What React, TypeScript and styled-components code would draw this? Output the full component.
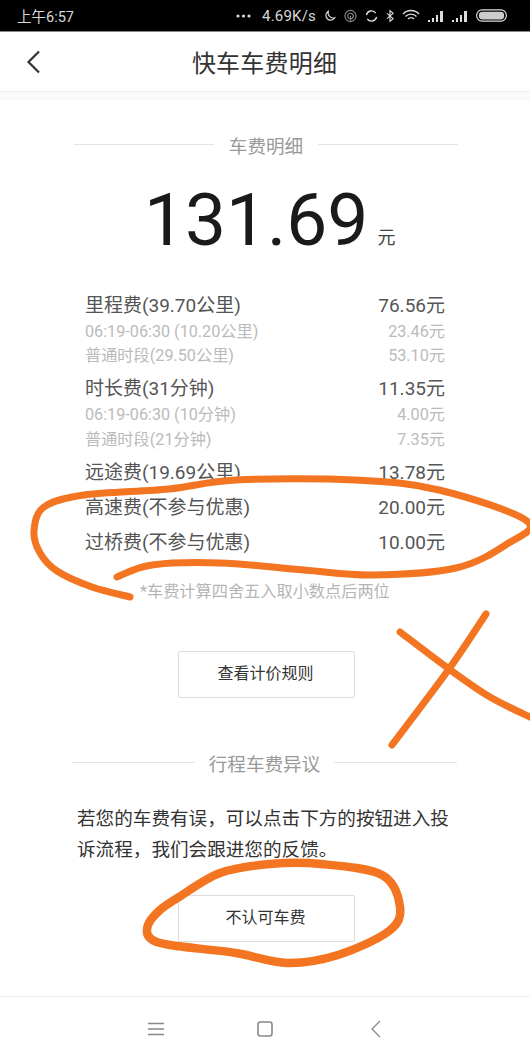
import React from "react";
import styled, { createGlobalStyle } from "styled-components";

const Global = createGlobalStyle`
  html, body { margin: 0; padding: 0; background: #fff; }
  * { box-sizing: border-box; }
  body { font-family: Roboto, "Noto Sans CJK SC", sans-serif; }
`;

const Page = styled.div`
  position: relative;
  width: 530px;
  height: 1060px;
  overflow: hidden;
  display: flex;
  flex-direction: column;
  background: #fff;
`;

const StatusBar = styled.div`
  height: 32px;
  flex: none;
  background: #000;
  color: #d8d8d8;
  display: flex;
  align-items: center;
  justify-content: space-between;
  padding: 0 23px 0 17px;
  font-size: 14.5px;
  border-bottom: 1px solid #888;
`;

const StatusRight = styled.div`
  display: flex;
  align-items: center;
  gap: 8px;
`;

const Speed = styled.span`
  font-size: 15px;
  margin-left: 3px;
  letter-spacing: 0.2px;
`;

const Header = styled.header`
  height: 60px;
  flex: none;
  position: relative;
  display: flex;
  align-items: center;
  justify-content: center;
  border-bottom: 1px solid #f0f0f0;
`;

const BackButton = styled.div`
  position: absolute;
  left: 25px;
  top: 17px;
  line-height: 0;
`;

const Title = styled.h1`
  margin: 0;
  padding-right: 1px;
  font-size: 24px;
  font-weight: 400;
  color: #333;
  letter-spacing: 0.2px;
`;

const Gap = styled.div`
  height: 8px;
  flex: none;
  background: #fafafa;
`;

const Content = styled.main`
  flex: 1;
  min-height: 0;
  display: flex;
  flex-direction: column;
`;

const SectionHeading = styled.div<{ $top: number; $left: number; $right: number; $gap: number; $size: number }>`
  display: flex;
  align-items: center;
  gap: ${(p) => p.$gap}px;
  margin: ${(p) => p.$top}px ${(p) => p.$right}px 0 ${(p) => p.$left}px;
  height: 26px;
  font-size: ${(p) => p.$size}px;
  color: #999;
  white-space: nowrap;
  &::before, &::after {
    content: "";
    flex: 1;
    height: 1px;
    background: #e2e2e2;
  }
`;

const Amount = styled.div`
  margin: 21px 0 0 144px;
  height: 84px;
  display: flex;
  align-items: flex-end;
  gap: 9px;
  color: #1a1a1a;
`;

const Value = styled.span`
  font-size: 73px;
  font-weight: 400;
  line-height: 84px;
`;

const Unit = styled.span`
  font-size: 18px;
  line-height: 22px;
  color: #444;
  margin-bottom: 13px;
`;

const Rows = styled.div`
  margin: 29px 85px 0;
  display: flex;
  flex-direction: column;
`;

const Row = styled.div<{ $sub?: boolean; $top: number }>`
  display: flex;
  justify-content: space-between;
  align-items: center;
  height: 24px;
  margin-top: ${(p) => p.$top}px;
  font-size: ${(p) => (p.$sub ? 16.2 : 19)}px;
  color: ${(p) => (p.$sub ? "#bbb" : "#555")};
  white-space: nowrap;
`;

const Note = styled.div`
  margin: 30px 0 0 140px;
  height: 20px;
  line-height: 20px;
  font-size: 16.2px;
  color: #b5b5b5;
  white-space: nowrap;
`;

const OutlineButton = styled.div<{ $top: number }>`
  width: 177px;
  height: 47px;
  margin: ${(p) => p.$top}px 0 0 178px;
  padding: 0 2px 5px 0;
  border: 1px solid #dcdcdc;
  border-radius: 2px;
  display: flex;
  align-items: center;
  justify-content: center;
  font-size: 16px;
  color: #333;
`;

const Paragraph = styled.p`
  margin: 29px 0 0 77px;
  width: 376px;
  font-size: 18.6px;
  line-height: 31px;
  color: #333;
`;

const NavBar = styled.nav`
  position: absolute;
  left: 0;
  right: 0;
  bottom: 0;
  height: 64px;
  border-top: 1px solid #eee;
  background: #fff;
  display: flex;
  align-items: center;
  padding: 1px 0 0 148px;
`;

const NavSlot = styled.div<{ $left: number }>`
  margin-left: ${(p) => p.$left}px;
  line-height: 0;
`;

const Overlay = styled.svg`
  position: absolute;
  inset: 0;
  pointer-events: none;
`;

const rows: [string, string, boolean, number][] = [
  ["里程费(39.70公里)", "76.56元", false, 0],
  ["06:19-06:30 (10.20公里)", "23.46元", true, 3],
  ["普通时段(29.50公里)", "53.10元", true, 0],
  ["时长费(31分钟)", "11.35元", false, 8],
  ["06:19-06:30 (10分钟)", "4.00元", true, 3],
  ["普通时段(21分钟)", "7.35元", true, 1],
  ["远途费(19.69公里)", "13.78元", false, 8],
  ["高速费(不参与优惠)", "20.00元", false, 11],
  ["过桥费(不参与优惠)", "10.00元", false, 11],
];

type Pt = [number, number];

/* Catmull-Rom through the points of a hand-drawn pen stroke */
const smooth = (p: Pt[]) => {
  let d = `M${p[0][0]} ${p[0][1]}`;
  for (let i = 0; i < p.length - 1; i++) {
    const a = p[Math.max(i - 1, 0)];
    const b = p[i];
    const c = p[i + 1];
    const e = p[Math.min(i + 2, p.length - 1)];
    d += `C${b[0] + (c[0] - a[0]) / 6} ${b[1] + (c[1] - a[1]) / 6} ${c[0] - (e[0] - b[0]) / 6} ${c[1] - (e[1] - b[1]) / 6} ${c[0]} ${c[1]}`;
  }
  return d;
};

const loop: Pt[] = [
  [130, 597], [92, 587], [57, 571], [40, 553], [34, 531], [44, 507], [84, 495], [169, 489], [236, 480],
  [355, 480], [439, 490], [527, 521], [507, 544], [456, 568], [372, 575], [304, 570], [220, 563], [152, 565], [117, 577],
];
const crossA: Pt[] = [[486, 614], [449, 669], [392, 745]];
const crossB: Pt[] = [[400, 632], [449, 669], [490, 697], [532, 718]];
const ring: Pt[] = [
  [179, 897], [160, 910], [148, 925], [150, 938], [170, 945], [236, 953], [287, 963], [338, 955], [389, 931], [400, 907], [382, 875],
  [321, 864], [270, 864], [220, 873], [179, 897],
];

export default function App() {
  return (
    <Page>
      <Global />
      <StatusBar>
        <span>上午6:57</span>
        <StatusRight>
          <svg width="15" height="6" viewBox="0 0 15 6" fill="#ddd"><circle cx="2" cy="3" r="1.6" /><circle cx="7.5" cy="3" r="1.6" /><circle cx="13" cy="3" r="1.6" /></svg>
          <Speed>4.69K/s</Speed>
          <svg width="12" height="14" viewBox="0 0 14 14" fill="none" stroke="#ddd" strokeWidth="1.4"><path d="M5 1.5a5.5 5.5 0 1 0 7.5 7.5A6 6 0 0 1 5 1.5z" /></svg>
          <svg width="13" height="14" viewBox="0 0 14 14" fill="none" stroke="#888" strokeWidth="1.2"><circle cx="7" cy="7" r="6" /><circle cx="7" cy="7" r="3" /><path d="M7 7v5" /></svg>
          <svg width="13" height="14" viewBox="0 0 14 14" fill="none" stroke="#ddd" strokeWidth="1.5"><path d="M1.5 6A5.5 5.5 0 0 1 11.5 4M12.5 8A5.5 5.5 0 0 1 2.5 10" /></svg>
          <svg width="8" height="14" viewBox="0 0 9 14" fill="none" stroke="#ddd" strokeWidth="1.3"><path d="M1 4l7 6-3.5 3V1L8 4l-7 6" /></svg>
          <svg width="18" height="13" viewBox="0 0 18 13" fill="none" stroke="#ddd" strokeWidth="1.4"><path d="M1 5a11 11 0 0 1 16 0M3.5 7.5a7.5 7.5 0 0 1 11 0M6 10a4 4 0 0 1 6 0" /></svg>
          <svg width="16" height="12" viewBox="0 0 16 12" fill="#ddd"><path d="M0 10h2v2H0zM4 8h2v4H4zM8 5h2v7H8zM12 1h3v11h-3z" /></svg>
          <svg width="16" height="12" viewBox="0 0 16 12" fill="#ddd"><path d="M0 10h2v2H0zM4 8h2v4H4zM8 5h2v7H8zM12 1h3v11h-3z" /></svg>
          <svg width="31" height="13" viewBox="0 0 32 13"><rect x="0.7" y="0.7" width="30.6" height="11.6" rx="5.5" fill="none" stroke="#ddd" strokeWidth="1.2" /><rect x="3" y="2.5" width="26" height="8" rx="3.5" fill="#ccc" /></svg>
        </StatusRight>
      </StatusBar>
      <Header>
        <BackButton>
          <svg width="18" height="26" viewBox="0 0 18 26" fill="none" stroke="#333" strokeWidth="2.2"><path d="M14 2.5L3.5 13 14 23.5" /></svg>
        </BackButton>
        <Title>快车车费明细</Title>
      </Header>
      <Gap />
      <Content>
        <SectionHeading $top={31} $left={74} $right={72} $gap={15} $size={18.6}>车费明细</SectionHeading>
        <Amount>
          <Value>131.69</Value>
          <Unit>元</Unit>
        </Amount>
        <Rows>
          {rows.map(([l, v, sub, top]) => (
            <Row key={l} $sub={sub} $top={top}>
              <span>{l}</span>
              <span>{v}</span>
            </Row>
          ))}
        </Rows>
        <Note>*车费计算四舍五入取小数点后两位</Note>
        <OutlineButton $top={49}>查看计价规则</OutlineButton>
        <SectionHeading $top={51} $left={72} $right={73} $gap={14} $size={18.6}>行程车费异议</SectionHeading>
        <Paragraph>若您的车费有误，可以点击下方的按钮进入投诉流程，我们会跟进您的反馈。</Paragraph>
        <OutlineButton $top={29}>不认可车费</OutlineButton>
      </Content>
      <NavBar>
        <NavSlot $left={0}>
          <svg width="16" height="14" viewBox="0 0 16 14" stroke="#888" strokeWidth="1.3"><path d="M0 1.5h16M0 7h16M0 12.5h16" /></svg>
        </NavSlot>
        <NavSlot $left={93}>
          <svg width="16" height="16" viewBox="0 0 16 16" fill="none" stroke="#888" strokeWidth="1.6"><rect x="1" y="1" width="14" height="14" rx="2.5" /></svg>
        </NavSlot>
        <NavSlot $left={97}>
          <svg width="12" height="18" viewBox="0 0 12 18" fill="none" stroke="#888" strokeWidth="1.3"><path d="M10 1L2 9l8 8" /></svg>
        </NavSlot>
      </NavBar>
      <Overlay width="530" height="1060" viewBox="0 0 530 1060" fill="none" stroke="#f47521" strokeLinecap="round" strokeLinejoin="round">
        <path strokeWidth="7" d={smooth(loop)} />
        <path strokeWidth="7" d={smooth(crossA)} />
        <path strokeWidth="7" d={smooth(crossB)} />
        <path strokeWidth="8.5" d={smooth(ring)} />
      </Overlay>
    </Page>
  );
}
